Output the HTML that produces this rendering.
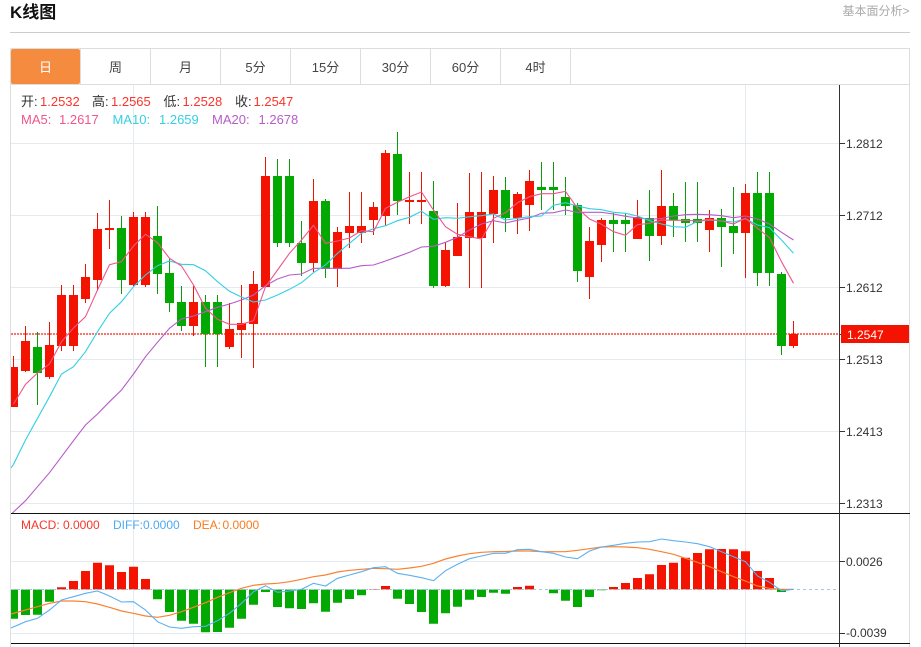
<!DOCTYPE html>
<html lang="zh">
<head>
<meta charset="utf-8">
<title>K线图</title>
<style>
html,body{margin:0;padding:0;background:#fff;width:921px;height:647px;overflow:hidden}
svg{display:block;position:absolute;left:0;top:0}
text{font-family:"Liberation Sans","Noto Sans CJK SC",sans-serif}
</style>
</head>
<body>
<svg width="921" height="647" viewBox="0 0 921 647" xmlns="http://www.w3.org/2000/svg">
<defs>
<clipPath id="c1"><rect x="11" y="85" width="828" height="428"/></clipPath>
<clipPath id="c2"><rect x="11" y="514" width="828" height="129"/></clipPath>
</defs>

<!-- header -->
<text x="10" y="18" font-size="17" font-weight="700" fill="#111">K线图</text>
<text x="842.5" y="15" font-size="12" fill="#aaa">基本面分析&gt;</text>
<path d="M10 32.5H910" stroke="#ccc" fill="none"/>

<!-- tabs -->
<path d="M10.5 48.5H909.5V647M10.5 48.5V647M10.5 84.5H909.5" stroke="#ddd" fill="none"/>
<path d="M80.5 49V84M150.5 49V84M220.5 49V84M290.5 49V84M360.5 49V84M430.5 49V84M500.5 49V84M570.5 49V84" stroke="#ddd" fill="none"/>
<rect x="11" y="49" width="69" height="35" rx="2" fill="#f58b3f"/>
<g font-size="13" text-anchor="middle" fill="#444">
<text x="45.5" y="72" fill="#fff">日</text>
<text x="115.5" y="72">周</text>
<text x="185.5" y="72">月</text>
<text x="255.5" y="72">5分</text>
<text x="325.5" y="72">15分</text>
<text x="395.5" y="72">30分</text>
<text x="465.5" y="72">60分</text>
<text x="535.5" y="72">4时</text>
</g>

<!-- grid -->
<path d="M11 143.5H839M11 215.5H839M11 287.5H839M11 359.5H839M11 431.5H839M11 503.5H839M11 561.5H839M11 633.5H839M133.5 85V647M745.5 85V647" stroke="#e5eaf0" fill="none"/>

<!-- main chart -->
<g clip-path="url(#c1)">
<path d="M11 334H839" stroke="#f8736a" stroke-width="2" stroke-dasharray="2 1" fill="none"/>
<path fill="none" stroke="#ea1400" d="M13.5 356V407M25.5 326V372M49.5 322V379M61.5 285V351M73.5 285V351M85.5 264V303M97.5 213V291M109.5 200V249M133.5 212V287M145.5 212V287M193.5 286V336M229.5 303V349M241.5 285V358M253.5 271V368M265.5 157V287M313.5 179V272M337.5 227V287M349.5 192V248M361.5 192V243M373.5 202V235M385.5 150V226M409.5 172V224M421.5 172V224M445.5 242V287M457.5 203V256M469.5 173V288M481.5 172V288M493.5 176V243M517.5 192V234M529.5 170V231M589.5 227V299M601.5 218V262M637.5 200V239M661.5 170V245M709.5 210V252M745.5 184V278M793.5 321V348"/>
<path fill="none" stroke="#0a9a0a" d="M37.5 332V405M121.5 216V294M157.5 206V294M169.5 258V312M181.5 286V331M205.5 295V367M217.5 295V367M277.5 159V247M289.5 159V247M301.5 221V276M325.5 199V278M397.5 132V215M433.5 181V288M505.5 177V232M541.5 162V210M553.5 162V210M565.5 177V215M577.5 203V282M613.5 213V252M625.5 213V252M649.5 190V261M673.5 193V237M685.5 182V242M697.5 182V242M721.5 209V267M733.5 187V254M757.5 172V286M769.5 172V286M781.5 272V355"/>
<path fill="#f41300" d="M9 367h9V407h-9zM21 341h9V371h-9zM45 345h9V377h-9zM57 295h9V346h-9zM69 295h9V346h-9zM81 277h9V299h-9zM93 229h9V280h-9zM105 228h9V230h-9zM129 217h9V285h-9zM141 217h9V285h-9zM189 302h9V326h-9zM225 329h9V347h-9zM237 323h9V330h-9zM249 284h9V324h-9zM261 176h9V287h-9zM309 201h9V263h-9zM333 232h9V269h-9zM345 226h9V233h-9zM357 226h9V233h-9zM369 207h9V220h-9zM381 153h9V216h-9zM405 200h9V202h-9zM417 200h9V202h-9zM441 250h9V286h-9zM453 237h9V256h-9zM465 212h9V238h-9zM477 212h9V238h-9zM489 190h9V214h-9zM513 194h9V218h-9zM525 181h9V205h-9zM585 241h9V277h-9zM597 220h9V245h-9zM633 217h9V239h-9zM657 206h9V236h-9zM705 218h9V230h-9zM741 193h9V233h-9zM789 334h9V346h-9z"/>
<path fill="#03a903" d="M33 347h9V373h-9zM117 228h9V280h-9zM153 236h9V274h-9zM165 273h9V303h-9zM177 302h9V326h-9zM201 302h9V334h-9zM213 302h9V334h-9zM273 176h9V243h-9zM285 176h9V243h-9zM297 243h9V263h-9zM321 201h9V269h-9zM393 154h9V201h-9zM429 211h9V286h-9zM501 190h9V218h-9zM537 187h9V190h-9zM549 187h9V190h-9zM561 197h9V206h-9zM573 205h9V271h-9zM609 220h9V224h-9zM621 220h9V224h-9zM645 218h9V236h-9zM669 206h9V220h-9zM681 219h9V223h-9zM693 219h9V223h-9zM717 218h9V227h-9zM729 226h9V233h-9zM753 193h9V273h-9zM765 193h9V273h-9zM777 274h9V346h-9z"/>
<!-- MA20 -->
<polyline fill="none" stroke="#b65cc9" stroke-width="1.1" points="1.5,524 13.5,512 25.5,500.7 37.5,486.7 49.5,472.7 61.5,456.7 73.5,440.7 85.5,425 97.5,414 109.5,401.7 121.5,390 133.5,374 145.5,356.7 157.5,342.3 169.5,328.3 181.5,319 193.5,316 205.5,311.7 217.5,307.3 229.5,304 241.5,300 253.5,295 265.5,285.7 277.5,279 289.5,275 301.5,274 313.5,268.3 325.5,268.3 337.5,268.3 349.5,268.3 361.5,265.7 373.5,265 385.5,261 397.5,256.7 409.5,252.3 421.5,247 433.5,246.3 445.5,242.3 457.5,237.3 469.5,230 481.5,224 493.5,220.7 505.5,223 517.5,220.3 529.5,218 541.5,213.3 553.5,212.7 565.5,210 577.5,212.3 589.5,212.3 601.5,212.3 613.5,214 625.5,216.3 637.5,218 649.5,219.3 661.5,218.5 673.5,216 685.5,214.7 697.5,214.3 709.5,214.7 721.5,215.7 733.5,217.7 745.5,216 757.5,219 769.5,224 781.5,232.3 793.5,240"/>
<!-- MA10 -->
<polyline fill="none" stroke="#33d0e2" stroke-width="1.1" points="11,468 13.5,464.3 25.5,440 37.5,418.3 49.5,396.7 61.5,374 73.5,366.7 85.5,351.7 97.5,331.7 109.5,313.3 121.5,301.7 133.5,286.7 145.5,275 157.5,265.7 169.5,261 181.5,264.3 193.5,264.7 205.5,270.7 217.5,281.7 229.5,291.3 241.5,297 253.5,302 265.5,300 277.5,295 289.5,289.3 301.5,282.7 313.5,272.7 325.5,265 337.5,253.3 349.5,243.3 361.5,233.3 373.5,228.7 385.5,225.7 397.5,220.7 409.5,217.3 421.5,211.3 433.5,219.3 445.5,217.7 457.5,218.3 469.5,216.7 481.5,215.7 493.5,214 505.5,220 517.5,218.3 529.5,216.7 541.5,216 553.5,205.3 565.5,202.7 577.5,206 589.5,208.7 601.5,209.7 613.5,212.3 625.5,213.3 637.5,216 649.5,220.7 661.5,224 673.5,226.7 685.5,227.3 697.5,221.3 709.5,220 721.5,221 733.5,222 745.5,218.7 757.5,225 769.5,227.7 781.5,240 793.5,253.3"/>
<!-- MA5 -->
<polyline fill="none" stroke="#f0558c" stroke-width="1.1" points="13.5,404 25.5,384.3 37.5,373 49.5,364 61.5,341.7 73.5,328 85.5,316.7 97.5,290 109.5,264.7 121.5,261.7 133.5,246 145.5,234.3 157.5,242.7 169.5,258.3 181.5,266 193.5,285 205.5,308.3 217.5,319.3 229.5,324.3 241.5,324.3 253.5,320.7 265.5,286.7 277.5,270 289.5,253.3 301.5,240 313.5,225.3 325.5,243.3 337.5,241 349.5,238 361.5,230.7 373.5,231.7 385.5,208.3 397.5,202.3 409.5,196.7 421.5,192 433.5,210 445.5,226.7 457.5,234.3 469.5,236.7 481.5,239 493.5,218.3 505.5,212.7 517.5,202.7 529.5,196.7 541.5,193.7 553.5,193.7 565.5,191.3 577.5,208.3 589.5,219 601.5,224.3 613.5,231.7 625.5,235.3 637.5,224.7 649.5,223.3 661.5,220 673.5,220.3 685.5,220.3 697.5,221 709.5,219.3 721.5,221 733.5,224 745.5,218.3 757.5,228.3 769.5,237.7 781.5,261.7 793.5,283.3"/>
</g>

<!-- MACD -->
<g clip-path="url(#c2)">
<path fill="#f41300" d="M57 587.3h9V589.5h-9zM69 581h9V589.5h-9zM81 571h9V589.5h-9zM93 562.7h9V589.5h-9zM105 565.3h9V589.5h-9zM117 572h9V589.5h-9zM129 566.7h9V589.5h-9zM141 579h9V589.5h-9zM369 589h9V589.5h-9zM381 586h9V589.5h-9zM513 587h9V589.5h-9zM525 585.7h9V589.5h-9zM609 587h9V589.5h-9zM621 583h9V589.5h-9zM633 578h9V589.5h-9zM645 574.3h9V589.5h-9zM657 565h9V589.5h-9zM669 562.7h9V589.5h-9zM681 557.7h9V589.5h-9zM693 553h9V589.5h-9zM705 549.3h9V589.5h-9zM717 549h9V589.5h-9zM729 549.3h9V589.5h-9zM741 551.3h9V589.5h-9zM753 571h9V589.5h-9zM765 578h9V589.5h-9z"/>
<path fill="#03a903" d="M9 589.5h9V618.7h-9zM21 589.5h9V615h-9zM33 589.5h9V614.7h-9zM45 589.5h9V601.7h-9zM153 589.5h9V599.3h-9zM165 589.5h9V612h-9zM177 589.5h9V620.7h-9zM189 589.5h9V623.7h-9zM201 589.5h9V632.3h-9zM213 589.5h9V632h-9zM225 589.5h9V627.7h-9zM237 589.5h9V618.7h-9zM249 589.5h9V604.7h-9zM261 589.5h9V592h-9zM273 589.5h9V607h-9zM285 589.5h9V608.3h-9zM297 589.5h9V609h-9zM309 589.5h9V603.3h-9zM321 589.5h9V611.7h-9zM333 589.5h9V602.7h-9zM345 589.5h9V599h-9zM357 589.5h9V595.3h-9zM393 589.5h9V598.7h-9zM405 589.5h9V604h-9zM417 589.5h9V612h-9zM429 589.5h9V623.7h-9zM441 589.5h9V613.3h-9zM453 589.5h9V606.7h-9zM465 589.5h9V599.7h-9zM477 589.5h9V597h-9zM489 589.5h9V592.7h-9zM501 589.5h9V593.7h-9zM549 589.5h9V593.3h-9zM561 589.5h9V600.7h-9zM573 589.5h9V607h-9zM585 589.5h9V597h-9zM597 589.5h9V590.3h-9zM777 589.5h9V592h-9z"/>
<path d="M11 589.5H839" stroke="#9ccbe0" stroke-dasharray="3 3" fill="none"/>
<!-- DEA -->
<polyline fill="none" stroke="#f98232" stroke-width="1.2" points="11,614 25.5,610 37.5,606.7 49.5,603.3 61.5,601 73.5,601 85.5,601.7 97.5,604 109.5,607.3 121.5,611 133.5,613.3 145.5,616 157.5,617.3 169.5,615.3 181.5,611.7 193.5,607.3 205.5,602.7 217.5,597.3 229.5,592.7 241.5,588.3 253.5,585.3 265.5,584 277.5,583.3 289.5,581.7 301.5,579.3 313.5,576.7 325.5,575 337.5,572 349.5,570.3 361.5,569.3 373.5,568.3 385.5,568.7 397.5,569.3 409.5,568 421.5,566.3 433.5,563.3 445.5,559 457.5,556 469.5,553.7 481.5,552.3 493.5,551.7 505.5,551.5 517.5,551 529.5,551 541.5,551.7 553.5,551.7 565.5,551.7 577.5,550.3 589.5,548.7 601.5,547 613.5,546.7 625.5,547 637.5,547.7 649.5,549.3 661.5,551.7 673.5,554.3 685.5,558.3 697.5,562.3 709.5,566.7 721.5,571.7 733.5,576.7 745.5,581 757.5,586 769.5,588.3 781.5,589.3 793.5,589.3"/>
<!-- DIFF -->
<polyline fill="none" stroke="#5db0f0" stroke-width="1.1" points="11,628 25.5,621.7 37.5,618.3 49.5,610 61.5,600 73.5,596.7 85.5,593.3 97.5,591 109.5,596 121.5,602 133.5,601.7 145.5,610 157.5,621.7 169.5,627 181.5,628.3 193.5,626.7 205.5,626.3 217.5,620.7 229.5,613.3 241.5,603.3 253.5,591.7 265.5,585.7 277.5,592.3 289.5,591 301.5,589.3 313.5,583.3 325.5,586 337.5,578.3 349.5,575 361.5,571.7 373.5,567.7 385.5,566.7 397.5,573.3 409.5,575.3 421.5,577.7 433.5,580.7 445.5,570.7 457.5,564.3 469.5,558.7 481.5,556 493.5,553.3 505.5,553.3 517.5,549.7 529.5,549.3 541.5,551.7 553.5,553.3 565.5,557 577.5,558.7 589.5,551 601.5,547 613.5,545.3 625.5,543.3 637.5,542 649.5,541.7 661.5,539 673.5,540.7 685.5,542 697.5,543.7 709.5,546.7 721.5,551.7 733.5,556.7 745.5,561.7 757.5,576 769.5,582.3 781.5,590.7 793.5,589.3"/>
</g>

<!-- frame lines -->
<path d="M11 513.5H910M11 643.5H910" stroke="#111" fill="none"/>
<path d="M839.5 85V647" stroke="#333" fill="none"/>
<path d="M840 143.5h5M840 215.5h5M840 287.5h5M840 359.5h5M840 431.5h5M840 503.5h5M840 561.5h5M840 633.5h5" stroke="#333" fill="none"/>

<!-- axis labels -->
<g font-size="12" fill="#333">
<text x="846" y="148">1.2812</text>
<text x="846" y="220">1.2712</text>
<text x="846" y="292">1.2612</text>
<text x="846" y="364">1.2513</text>
<text x="846" y="436">1.2413</text>
<text x="846" y="508">1.2313</text>
<text x="846" y="566">0.0026</text>
<text x="846" y="637">-0.0039</text>
</g>
<rect x="841" y="325" width="68" height="18" fill="#f41300"/>
<path d="M840 334.5h1" stroke="#333" fill="none"/>
<text x="847" y="339" font-size="12" fill="#fff">1.2547</text>

<!-- legend -->
<g font-size="13">
<text x="21" y="106" fill="#333">开:</text><text x="40" y="106" fill="#f8352a">1.2532</text>
<text x="92" y="106" fill="#333">高:</text><text x="111" y="106" fill="#f8352a">1.2565</text>
<text x="163.5" y="106" fill="#333">低:</text><text x="182.5" y="106" fill="#f8352a">1.2528</text>
<text x="235" y="106" fill="#333">收:</text><text x="253.5" y="106" fill="#f8352a">1.2547</text>
<text x="21" y="124" fill="#f0558c">MA5:</text><text x="59" y="124" fill="#f0558c">1.2617</text>
<text x="112.5" y="124" fill="#33d0e2">MA10:</text><text x="159" y="124" fill="#33d0e2">1.2659</text>
<text x="212" y="124" fill="#b65cc9">MA20:</text><text x="258.5" y="124" fill="#b65cc9">1.2678</text>
</g>
<g font-size="12">
<text x="21" y="529" fill="#f8352a">MACD:</text><text x="63" y="529" fill="#f8352a">0.0000</text>
<text x="113" y="529" fill="#4da8f5">DIFF:</text><text x="143" y="529" fill="#4da8f5">0.0000</text>
<text x="193" y="529" fill="#fa7a1e">DEA:</text><text x="222.5" y="529" fill="#fa7a1e">0.0000</text>
</g>
</svg>
</body>
</html>
